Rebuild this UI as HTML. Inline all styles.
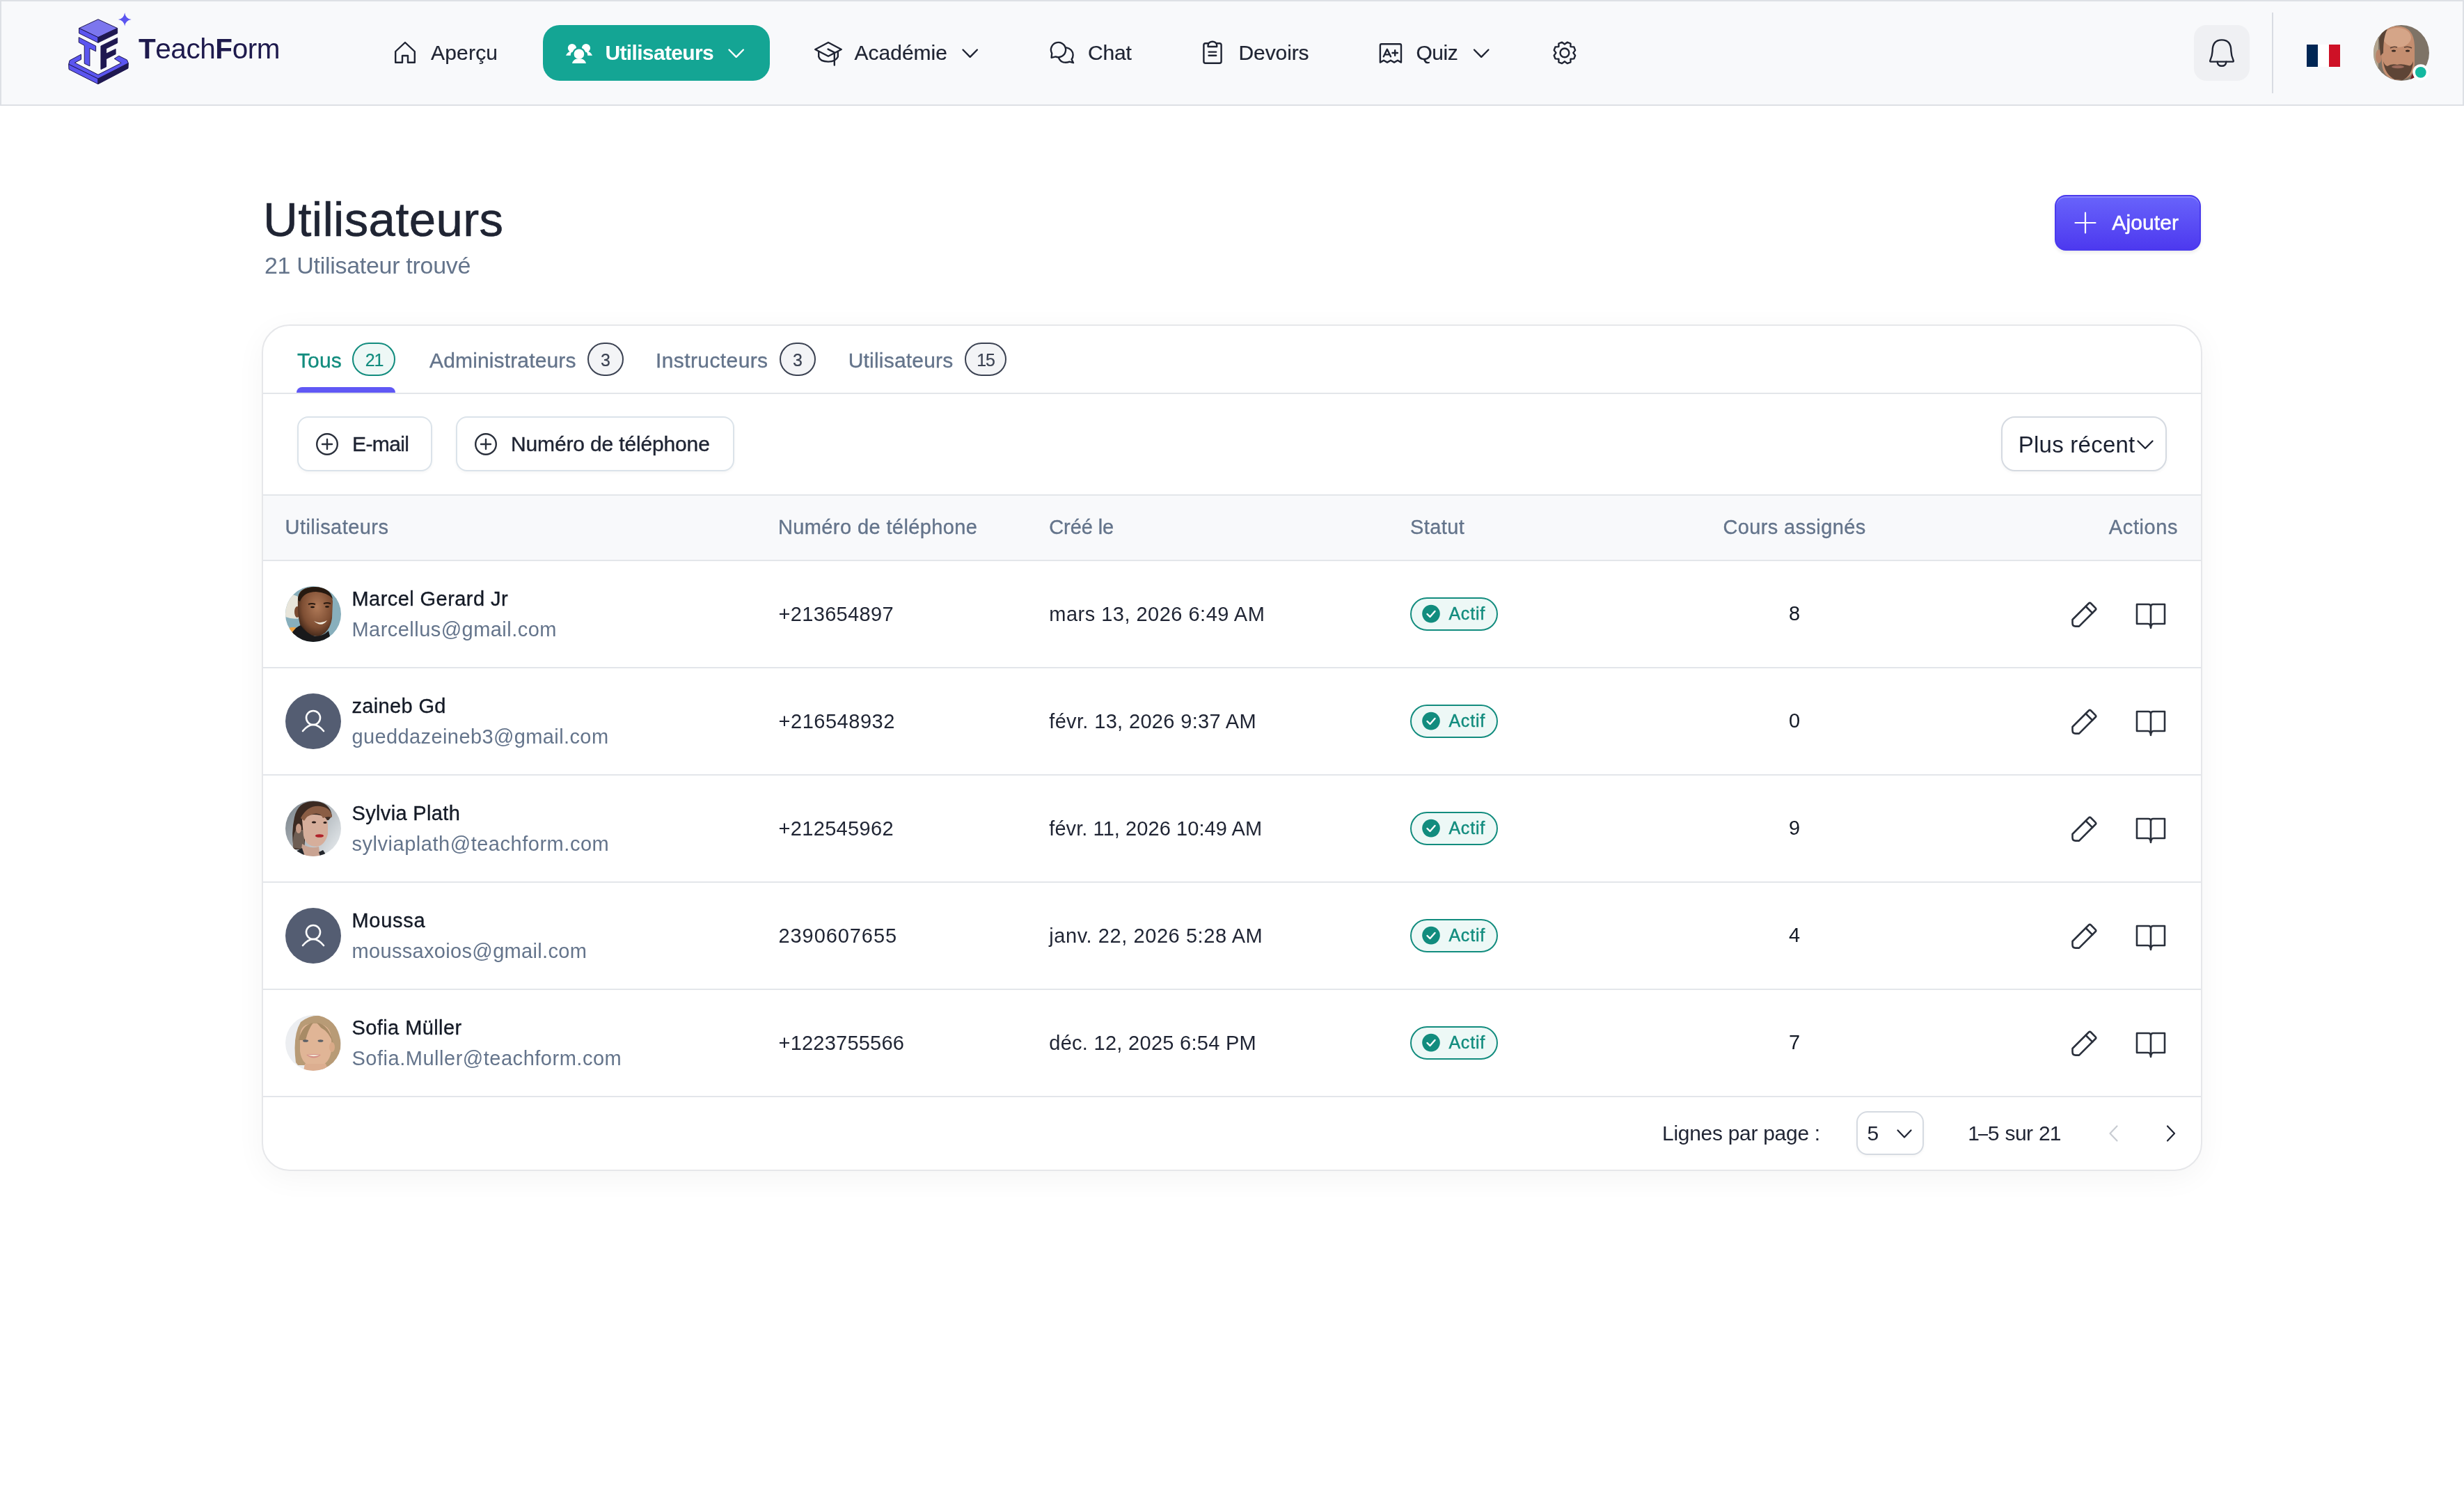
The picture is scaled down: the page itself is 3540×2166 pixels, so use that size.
<!DOCTYPE html>
<html><head><meta charset="utf-8"><title>Utilisateurs</title>
<style>
html,body{margin:0;padding:0;background:#ffffff;}
body{width:3540px;height:2166px;position:relative;overflow:hidden;font-family:"Liberation Sans", sans-serif;}
.t{position:absolute;white-space:nowrap;font-family:"Liberation Sans", sans-serif;}
.t b{font-weight:700;}
svg.ov{position:absolute;left:0;top:0;}
#txt{position:absolute;left:0;top:0;width:3540px;height:2166px;will-change:transform;}
@media (max-width:2400px){html{zoom:0.5;}}
@media (max-width:1500px){html{zoom:0.33333;}}
</style></head><body>
<div style='position:absolute;left:0px;top:0px;width:3540px;height:152px;background:#f8f9fb;border:2px solid #dde0e5;box-sizing:border-box;'></div>
<div style='position:absolute;left:780px;top:36px;width:326px;height:80px;background:#14a594;border-radius:24px;'></div>
<div style='position:absolute;left:3152px;top:36px;width:80px;height:80px;background:#eff0f3;border-radius:18px;'></div>
<div style='position:absolute;left:3264px;top:18px;width:2px;height:116px;background:#d9dce2;'></div>
<div style='position:absolute;left:3314px;top:64px;width:16px;height:32px;background:#002654;'></div>
<div style='position:absolute;left:3330px;top:64px;width:16px;height:32px;background:#ffffff;'></div>
<div style='position:absolute;left:3346px;top:64px;width:16px;height:32px;background:#ce1126;'></div>
<div style='position:absolute;left:2952px;top:280px;width:210px;height:80px;background:linear-gradient(#6863fb,#4d39ef);border:2px solid #4a3aee;box-sizing:border-box;border-radius:16px;box-shadow:inset 0 2px 0 rgba(255,255,255,0.22),0 3px 5px rgba(0,0,0,0.08);'></div>
<div style='position:absolute;left:376px;top:466px;width:2788px;height:1216px;background:#ffffff;border:2px solid #e6e7ea;border-radius:40px;box-sizing:border-box;box-shadow:0 10px 44px rgba(0,0,0,0.045);'></div>
<div style='position:absolute;left:506px;top:492px;width:62px;height:48px;background:#eef8f6;border:2px solid #128c7e;border-radius:24px;box-sizing:border-box;'></div>
<div style='position:absolute;left:426px;top:556px;width:142px;height:8px;background:#6058f5;border-radius:8px 8px 0 0;'></div>
<div style='position:absolute;left:844px;top:492px;width:52px;height:48px;background:#f3f4f6;border:2px solid #3b4252;border-radius:24px;box-sizing:border-box;'></div>
<div style='position:absolute;left:1120px;top:492px;width:52px;height:48px;background:#f3f4f6;border:2px solid #3b4252;border-radius:24px;box-sizing:border-box;'></div>
<div style='position:absolute;left:1386px;top:492px;width:60px;height:48px;background:#f3f4f6;border:2px solid #3b4252;border-radius:24px;box-sizing:border-box;'></div>
<div style='position:absolute;left:378px;top:564px;width:2784px;height:2px;background:#e3e6ea;'></div>
<div style='position:absolute;left:427px;top:598px;width:194px;height:79px;background:#fff;border:2px solid #dbe3ea;border-radius:16px;box-sizing:border-box;box-shadow:0 2px 4px rgba(0,0,0,0.04);'></div>
<div style='position:absolute;left:655px;top:598px;width:400px;height:79px;background:#fff;border:2px solid #dbe3ea;border-radius:16px;box-sizing:border-box;box-shadow:0 2px 4px rgba(0,0,0,0.04);'></div>
<div style='position:absolute;left:2875px;top:598px;width:238px;height:79px;background:#fff;border:2px solid #d5dae1;border-radius:20px;box-sizing:border-box;box-shadow:0 2px 4px rgba(0,0,0,0.04);'></div>
<div style='position:absolute;left:378px;top:710px;width:2784px;height:2px;background:#e3e6ea;'></div>
<div style='position:absolute;left:378px;top:712px;width:2784px;height:92px;background:#f8f9fb;'></div>
<div style='position:absolute;left:378px;top:804px;width:2784px;height:2px;background:#e3e6ea;'></div>
<div style='position:absolute;left:378px;top:958px;width:2784px;height:2px;background:#e3e6ea;'></div>
<div style='position:absolute;left:2026px;top:858px;width:126px;height:48px;background:#edf8f6;border:2px solid #128c7e;border-radius:24px;box-sizing:border-box;'></div>
<div style='position:absolute;left:378px;top:1112px;width:2784px;height:2px;background:#e3e6ea;'></div>
<div style='position:absolute;left:2026px;top:1012px;width:126px;height:48px;background:#edf8f6;border:2px solid #128c7e;border-radius:24px;box-sizing:border-box;'></div>
<div style='position:absolute;left:378px;top:1266px;width:2784px;height:2px;background:#e3e6ea;'></div>
<div style='position:absolute;left:2026px;top:1166px;width:126px;height:48px;background:#edf8f6;border:2px solid #128c7e;border-radius:24px;box-sizing:border-box;'></div>
<div style='position:absolute;left:378px;top:1420px;width:2784px;height:2px;background:#e3e6ea;'></div>
<div style='position:absolute;left:2026px;top:1320px;width:126px;height:48px;background:#edf8f6;border:2px solid #128c7e;border-radius:24px;box-sizing:border-box;'></div>
<div style='position:absolute;left:378px;top:1574px;width:2784px;height:2px;background:#e3e6ea;'></div>
<div style='position:absolute;left:2026px;top:1474px;width:126px;height:48px;background:#edf8f6;border:2px solid #128c7e;border-radius:24px;box-sizing:border-box;'></div>
<div style='position:absolute;left:2667px;top:1596px;width:97px;height:63px;background:#fff;border:2px solid #d5dae1;border-radius:16px;box-sizing:border-box;box-shadow:0 2px 4px rgba(0,0,0,0.04);'></div>
<div style='position:absolute;left:2842px;top:1628.6px;width:13.5px;height:2.2000000000000455px;background:#1f2433;'></div>
<div id="txt">
<span class='t' style='left:199.00px;top:50.08px;font-size:40.5px;line-height:40.5px;color:#1e1a4d;letter-spacing:-0.45px;font-weight:400;'><b>T</b>each<b>F</b>orm</span>
<span class='t' style='left:619.00px;top:61.00px;font-size:30px;line-height:30px;color:#1f2433;letter-spacing:0.2px;font-weight:400;-webkit-text-stroke:0.2px #1f2433;'>Aperçu</span>
<span class='t' style='left:869.50px;top:61.00px;font-size:30px;line-height:30px;color:#ffffff;letter-spacing:-0.66px;font-weight:700;'>Utilisateurs</span>
<span class='t' style='left:1227.50px;top:61.00px;font-size:30px;line-height:30px;color:#1f2433;letter-spacing:0.0px;font-weight:400;-webkit-text-stroke:0.2px #1f2433;'>Académie</span>
<span class='t' style='left:1563.00px;top:61.00px;font-size:30px;line-height:30px;color:#1f2433;letter-spacing:-0.2px;font-weight:400;-webkit-text-stroke:0.2px #1f2433;'>Chat</span>
<span class='t' style='left:1779.50px;top:61.00px;font-size:30px;line-height:30px;color:#1f2433;letter-spacing:-0.1px;font-weight:400;-webkit-text-stroke:0.2px #1f2433;'>Devoirs</span>
<span class='t' style='left:2034.50px;top:61.00px;font-size:30px;line-height:30px;color:#1f2433;letter-spacing:-0.5px;font-weight:400;-webkit-text-stroke:0.2px #1f2433;'>Quiz</span>
<span class='t' style='left:378.00px;top:281.35px;font-size:69px;line-height:69px;color:#1f2433;letter-spacing:0.35px;font-weight:400;-webkit-text-stroke:0.6px #1f2433;'>Utilisateurs</span>
<span class='t' style='left:380.00px;top:363.60px;font-size:34px;line-height:34px;color:#64748b;letter-spacing:-0.3px;font-weight:400;'>21 Utilisateur trouvé</span>
<span class='t' style='left:3034.30px;top:304.50px;font-size:30px;line-height:30px;color:#ffffff;letter-spacing:0.1px;font-weight:400;-webkit-text-stroke:0.5px #ffffff;'>Ajouter</span>
<span class='t' style='left:427.00px;top:502.50px;font-size:30px;line-height:30px;color:#128c7e;letter-spacing:0.1px;font-weight:400;-webkit-text-stroke:0.35px #128c7e;'>Tous</span>
<span class='t' style='left:537.40px;transform:translateX(-50%);top:504.75px;font-size:25px;line-height:25px;color:#128c7e;letter-spacing:-1.2px;font-weight:400;-webkit-text-stroke:0.2px #128c7e;'>21</span>
<span class='t' style='left:617.00px;top:502.50px;font-size:30px;line-height:30px;color:#64748b;letter-spacing:0.15px;font-weight:400;-webkit-text-stroke:0.35px #64748b;'>Administrateurs</span>
<span class='t' style='left:870.00px;transform:translateX(-50%);top:504.75px;font-size:25px;line-height:25px;color:#3b4252;letter-spacing:0.0px;font-weight:400;-webkit-text-stroke:0.2px #3b4252;'>3</span>
<span class='t' style='left:942.00px;top:502.50px;font-size:30px;line-height:30px;color:#64748b;letter-spacing:0.4px;font-weight:400;-webkit-text-stroke:0.35px #64748b;'>Instructeurs</span>
<span class='t' style='left:1146.00px;transform:translateX(-50%);top:504.75px;font-size:25px;line-height:25px;color:#3b4252;letter-spacing:0.0px;font-weight:400;-webkit-text-stroke:0.2px #3b4252;'>3</span>
<span class='t' style='left:1218.70px;top:502.50px;font-size:30px;line-height:30px;color:#64748b;letter-spacing:0.2px;font-weight:400;-webkit-text-stroke:0.35px #64748b;'>Utilisateurs</span>
<span class='t' style='left:1416.00px;transform:translateX(-50%);top:504.75px;font-size:25px;line-height:25px;color:#3b4252;letter-spacing:-1.2px;font-weight:400;-webkit-text-stroke:0.2px #3b4252;'>15</span>
<span class='t' style='left:506.00px;top:623.25px;font-size:30px;line-height:30px;color:#1f2433;letter-spacing:-0.6px;font-weight:400;-webkit-text-stroke:0.4px #1f2433;'>E-mail</span>
<span class='t' style='left:734.00px;top:623.25px;font-size:30px;line-height:30px;color:#1f2433;letter-spacing:-0.15px;font-weight:400;-webkit-text-stroke:0.4px #1f2433;'>Numéro de téléphone</span>
<span class='t' style='left:2899.70px;top:621.55px;font-size:33px;line-height:33px;color:#1a2030;letter-spacing:0.25px;font-weight:400;'>Plus récent</span>
<span class='t' style='left:409.50px;top:743.35px;font-size:29px;line-height:29px;color:#64748b;letter-spacing:0.46px;font-weight:400;-webkit-text-stroke:0.35px #64748b;'>Utilisateurs</span>
<span class='t' style='left:1117.90px;top:743.35px;font-size:29px;line-height:29px;color:#64748b;letter-spacing:0.4px;font-weight:400;-webkit-text-stroke:0.35px #64748b;'>Numéro de téléphone</span>
<span class='t' style='left:1507.25px;top:743.35px;font-size:29px;line-height:29px;color:#64748b;letter-spacing:-0.09px;font-weight:400;-webkit-text-stroke:0.35px #64748b;'>Créé le</span>
<span class='t' style='left:2026.00px;top:743.35px;font-size:29px;line-height:29px;color:#64748b;letter-spacing:0.39px;font-weight:400;-webkit-text-stroke:0.35px #64748b;'>Statut</span>
<span class='t' style='left:2578.00px;transform:translateX(-50%);top:743.35px;font-size:29px;line-height:29px;color:#64748b;letter-spacing:0.37px;font-weight:400;-webkit-text-stroke:0.35px #64748b;'>Cours assignés</span>
<span class='t' style='left:3129.20px;transform:translateX(-100%);top:743.35px;font-size:29px;line-height:29px;color:#64748b;letter-spacing:0.61px;font-weight:400;-webkit-text-stroke:0.35px #64748b;'>Actions</span>
<span class='t' style='left:505.50px;top:845.85px;font-size:29px;line-height:29px;color:#141a26;letter-spacing:0.434px;font-weight:400;-webkit-text-stroke:0.35px #141a26;'>Marcel Gerard Jr</span>
<span class='t' style='left:505.50px;top:889.85px;font-size:29px;line-height:29px;color:#64748b;letter-spacing:0.456px;font-weight:400;'>Marcellus@gmail.com</span>
<span class='t' style='left:1118.50px;top:867.85px;font-size:29px;line-height:29px;color:#1f2433;letter-spacing:0.334px;font-weight:400;'>+213654897</span>
<span class='t' style='left:1507.25px;top:867.85px;font-size:29px;line-height:29px;color:#1f2433;letter-spacing:0.485px;font-weight:400;'>mars 13, 2026 6:49 AM</span>
<span class='t' style='left:2081.40px;top:868.75px;font-size:25px;line-height:25px;color:#128c7e;letter-spacing:0.8px;font-weight:400;-webkit-text-stroke:0.45px #128c7e;'>Actif</span>
<span class='t' style='left:2578.00px;transform:translateX(-50%);top:867.35px;font-size:29px;line-height:29px;color:#141a26;letter-spacing:0.0px;font-weight:400;'>8</span>
<span class='t' style='left:505.50px;top:999.85px;font-size:29px;line-height:29px;color:#141a26;letter-spacing:0.34px;font-weight:400;-webkit-text-stroke:0.35px #141a26;'>zaineb Gd</span>
<span class='t' style='left:505.50px;top:1043.85px;font-size:29px;line-height:29px;color:#64748b;letter-spacing:0.391px;font-weight:400;'>gueddazeineb3@gmail.com</span>
<span class='t' style='left:1118.50px;top:1021.85px;font-size:29px;line-height:29px;color:#1f2433;letter-spacing:0.533px;font-weight:400;'>+216548932</span>
<span class='t' style='left:1507.25px;top:1021.85px;font-size:29px;line-height:29px;color:#1f2433;letter-spacing:0.344px;font-weight:400;'>févr. 13, 2026 9:37 AM</span>
<span class='t' style='left:2081.40px;top:1022.75px;font-size:25px;line-height:25px;color:#128c7e;letter-spacing:0.8px;font-weight:400;-webkit-text-stroke:0.45px #128c7e;'>Actif</span>
<span class='t' style='left:2578.00px;transform:translateX(-50%);top:1021.35px;font-size:29px;line-height:29px;color:#141a26;letter-spacing:0.0px;font-weight:400;'>0</span>
<span class='t' style='left:505.50px;top:1153.85px;font-size:29px;line-height:29px;color:#141a26;letter-spacing:0.35px;font-weight:400;-webkit-text-stroke:0.35px #141a26;'>Sylvia Plath</span>
<span class='t' style='left:505.50px;top:1197.85px;font-size:29px;line-height:29px;color:#64748b;letter-spacing:0.525px;font-weight:400;'>sylviaplath@teachform.com</span>
<span class='t' style='left:1118.50px;top:1175.85px;font-size:29px;line-height:29px;color:#1f2433;letter-spacing:0.334px;font-weight:400;'>+212545962</span>
<span class='t' style='left:1507.25px;top:1175.85px;font-size:29px;line-height:29px;color:#1f2433;letter-spacing:0.078px;font-weight:400;'>févr. 11, 2026 10:49 AM</span>
<span class='t' style='left:2081.40px;top:1176.75px;font-size:25px;line-height:25px;color:#128c7e;letter-spacing:0.8px;font-weight:400;-webkit-text-stroke:0.45px #128c7e;'>Actif</span>
<span class='t' style='left:2578.00px;transform:translateX(-50%);top:1175.35px;font-size:29px;line-height:29px;color:#141a26;letter-spacing:0.0px;font-weight:400;'>9</span>
<span class='t' style='left:505.50px;top:1307.85px;font-size:29px;line-height:29px;color:#141a26;letter-spacing:0.7px;font-weight:400;-webkit-text-stroke:0.35px #141a26;'>Moussa</span>
<span class='t' style='left:505.50px;top:1351.85px;font-size:29px;line-height:29px;color:#64748b;letter-spacing:0.33px;font-weight:400;'>moussaxoios@gmail.com</span>
<span class='t' style='left:1118.50px;top:1329.85px;font-size:29px;line-height:29px;color:#1f2433;letter-spacing:0.922px;font-weight:400;'>2390607655</span>
<span class='t' style='left:1507.25px;top:1329.85px;font-size:29px;line-height:29px;color:#1f2433;letter-spacing:0.57px;font-weight:400;'>janv. 22, 2026 5:28 AM</span>
<span class='t' style='left:2081.40px;top:1330.75px;font-size:25px;line-height:25px;color:#128c7e;letter-spacing:0.8px;font-weight:400;-webkit-text-stroke:0.45px #128c7e;'>Actif</span>
<span class='t' style='left:2578.00px;transform:translateX(-50%);top:1329.35px;font-size:29px;line-height:29px;color:#141a26;letter-spacing:0.0px;font-weight:400;'>4</span>
<span class='t' style='left:505.50px;top:1461.85px;font-size:29px;line-height:29px;color:#141a26;letter-spacing:0.413px;font-weight:400;-webkit-text-stroke:0.35px #141a26;'>Sofia Müller</span>
<span class='t' style='left:505.50px;top:1505.85px;font-size:29px;line-height:29px;color:#64748b;letter-spacing:0.516px;font-weight:400;'>Sofia.Muller@teachform.com</span>
<span class='t' style='left:1118.50px;top:1483.85px;font-size:29px;line-height:29px;color:#1f2433;letter-spacing:0.22px;font-weight:400;'>+1223755566</span>
<span class='t' style='left:1507.25px;top:1483.85px;font-size:29px;line-height:29px;color:#1f2433;letter-spacing:0.285px;font-weight:400;'>déc. 12, 2025 6:54 PM</span>
<span class='t' style='left:2081.40px;top:1484.75px;font-size:25px;line-height:25px;color:#128c7e;letter-spacing:0.8px;font-weight:400;-webkit-text-stroke:0.45px #128c7e;'>Actif</span>
<span class='t' style='left:2578.00px;transform:translateX(-50%);top:1483.35px;font-size:29px;line-height:29px;color:#141a26;letter-spacing:0.0px;font-weight:400;'>7</span>
<span class='t' style='left:2388.10px;top:1613.00px;font-size:30px;line-height:30px;color:#1f2433;letter-spacing:-0.3px;font-weight:400;'>Lignes par page :</span>
<span class='t' style='left:2682.50px;top:1613.00px;font-size:30px;line-height:30px;color:#1f2433;letter-spacing:0.0px;font-weight:400;'>5</span>
<span class='t' style='left:2827.20px;top:1613.00px;font-size:30px;line-height:30px;color:#1f2433;letter-spacing:0.0px;font-weight:400;'>1</span>
<span class='t' style='left:2855.70px;top:1613.00px;font-size:30px;line-height:30px;color:#1f2433;letter-spacing:0.0px;font-weight:400;'>5</span>
<span class='t' style='left:2880.50px;top:1613.00px;font-size:30px;line-height:30px;color:#1f2433;letter-spacing:-0.6px;font-weight:400;'>sur</span>
<span class='t' style='left:2929.00px;top:1613.00px;font-size:30px;line-height:30px;color:#1f2433;letter-spacing:-1.0px;font-weight:400;'>21</span>
</div>
<svg class="ov" width="3540" height="2166" viewBox="0 0 3540 2166">
<g stroke='#1f1851' stroke-width='1' stroke-linejoin='round'>
<polygon points='113.60,40.53 140.95,27.76 168.67,40.53 140.95,53.66' fill='#7c76ee'/>
<polygon points='113.60,40.53 140.95,53.66 140.95,61.32 113.60,47.82' fill='#5b55f0'/>
<polygon points='140.95,53.66 168.67,40.53 168.67,47.82 140.95,61.32' fill='#1f1851'/>
<polygon points='113.23,53.66 137.67,66.06 137.67,73.72 128.92,69.34 128.92,94.87 121.26,91.22 121.26,65.33 113.23,60.95' fill='#5b55f0'/>
<polygon points='144.96,66.06 168.67,54.39 168.67,61.68 152.62,69.70 152.62,77.00 166.12,70.43 166.12,77.73 152.62,84.66 152.62,95.96 144.96,99.61' fill='#1f1851'/>
<polygon points='116.52,78.09 116.52,85.39 107.40,90.13 140.95,107.27 174.14,90.49 164.29,84.29 170.86,80.28 182.53,86.12 184.35,90.86 140.95,113.10 98.65,92.32 100.11,86.85' fill='#5b55f0'/>
<polygon points='98.65,92.32 140.95,113.10 140.95,120.76 99.01,99.61' fill='#5b55f0'/>
<polygon points='140.95,113.10 184.35,90.86 183.99,98.15 140.95,120.76' fill='#1f1851'/>
</g>
<path d='M179.2,18.3 Q180.39999999999998,26.900000000000002 188.7,28.1 Q180.39999999999998,29.3 179.2,37.6 Q178.0,29.3 169.79999999999998,28.1 Q178.0,26.900000000000002 179.2,18.3 Z' fill='#5b55f0'/>
<g fill='none' stroke='#1f2433' stroke-width='2.4' stroke-linecap='round' stroke-linejoin='round'>
<path d='M568.2,74 L582,61 L595.8,74 V89.8 H586 V80 H578 V89.8 H568.2 Z'/>
<path d='M1171.2,71 L1190,61 L1208.8,71 L1190,80.8 Z'/>
<path d='M1189.6,70.6 L1198.8,75.4 V93.6'/>
<path d='M1176.2,74 V81.4 Q1178,88.4 1190,88.6 Q1200.5,88.4 1203.8,81.4 V74.2'/>
<path d='M1511.2,76.6 A10.6,10.6 0 1 1 1516.6,81.4 L1510.6,82.8 Z'/>
<path d='M1532.2,68.4 C1537.8,69.4 1541.6,73.6 1541.6,78.9 C1541.6,81.6 1540.8,83.6 1539.6,85.3 L1542,90.2 L1536.6,88.7 C1534.8,89.4 1533,89.8 1530.9,89.8 C1526.6,89.8 1523,87.4 1521.2,83.4'/>
<path d='M1735.6,62.2 H1732 Q1729.4,62.2 1729.4,64.8 V88.2 Q1729.4,90.8 1732,90.8 H1752 Q1754.6,90.8 1754.6,88.2 V64.8 Q1754.6,62.2 1752,62.2 H1748.2'/>
<path d='M1735.6,67 V65 A6.2,5.2 0 0 1 1748.2,65 V67 Z'/>
<path d='M1736.6,74.6 H1747.2 M1736.6,79.7 H1747.2'/>
<path d='M1982.9,89.6 V65.2 Q1982.9,63.3 1984.8,63.3 H2011.1 Q2013,63.3 2013,65.2 V89.6 L2008,86.8 L2003,89.6 L1998,86.8 L1993,89.6 L1988,86.8 Z'/>
<path d='M1987.8,81.2 L1992.9,70.8 L1998,81.2 M1989.4,78.4 H1996.4 M2004.2,72.3 V79.7 M2000.5,76 H2007.9'/>
<path d='M2247.90,63.50 L2251.70,60.70 L2256.40,62.50 L2256.40,67.10 L2261.30,67.40 L2263.10,72.10 L2260.30,75.90 L2260.30,75.90 L2263.10,79.70 L2261.30,84.40 L2256.40,84.70 L2256.40,89.30 L2251.70,91.10 L2247.90,88.30 L2247.90,88.30 L2244.10,91.10 L2239.40,89.30 L2239.40,84.70 L2234.50,84.40 L2232.70,79.70 L2235.50,75.90 L2235.50,75.90 L2232.70,72.10 L2234.50,67.40 L2239.40,67.10 L2239.40,62.50 L2244.10,60.70 L2247.90,63.50 Z'/>
<circle cx='2247.9' cy='75.9' r='6.4'/>
<path d='M1383.5,71.5 L1393.7,81.8 L1403.9,71.5'/>
<path d='M2118,71.5 L2128.2,81.8 L2138.4,71.5'/>
</g>
<g fill='none' stroke='#ffffff' stroke-width='2.4' stroke-linecap='round' stroke-linejoin='round'>
<path d='M1047.5,71.5 L1057.7,81.8 L1067.9,71.5'/>
</g>
<g fill='#ffffff'>
<circle cx='821.9' cy='69' r='6.1'/><circle cx='842' cy='69' r='6.1'/>
<path d='M813,79.8 Q815,74.5 821,73.5 L823,73.5 Q819.5,76 819.8,79.8 Z'/>
<path d='M851,79.8 Q849,74.5 843,73.5 L841,73.5 Q844.5,76 844.2,79.8 Z'/>
</g>
<circle cx='831.9' cy='77.5' r='9.6' fill='#14a594'/>
<path d='M821.9,91 Q823,85 829,84 L835,84 Q841,85 842,91 Z' fill='#14a594' stroke='#14a594' stroke-width='5'/>
<g fill='#ffffff'><circle cx='831.9' cy='77.7' r='7.3'/><path d='M821.9,91 Q823.5,85.5 828.5,84.5 L835.3,84.5 Q840.5,85.5 842,91 Z'/></g>
<g fill='none' stroke='#1f2433' stroke-width='2.4' stroke-linecap='round' stroke-linejoin='round'>
<path d='M3176.2,88.6 Q3174.6,88.6 3175.4,86.6 Q3178.4,79.5 3178.6,73.5 Q3178.6,57.4 3192,57.4 Q3205.4,57.4 3205.4,73.5 Q3205.6,79.5 3208.6,86.6 Q3209.4,88.6 3207.8,88.6 Z'/>
<path d='M3185.6,88.8 Q3186.2,94.8 3192,94.8 Q3197.8,94.8 3198.4,88.8'/>
</g>
<g fill='none' stroke='#ffffff' stroke-width='2.2' stroke-linecap='round' stroke-linejoin='round'>
<path d='M2996,305.5 V334.5 M2981.5,320 H3010.5'/>
</g>
<g fill='none' stroke='#2a303c' stroke-width='2.4' stroke-linecap='round' stroke-linejoin='round'>
<circle cx='470' cy='638' r='14.8'/><path d='M470,631 V645 M463,638 H477'/>
<circle cx='698' cy='638' r='14.8'/><path d='M698,631 V645 M691,638 H705'/>
</g>
<g fill='none' stroke='#1f2433' stroke-width='2.4' stroke-linecap='round' stroke-linejoin='round'>
<path d='M3071.5,633.5 L3082,644 L3092.5,633.5'/>
</g>
<circle cx='2056' cy='881.6' r='12.8' fill='#128c7e'/>
<path d='M2050.5,882 L2054.5,886 L2061.5,878' fill='none' stroke='#ffffff' stroke-width='2.4' stroke-linecap='round' stroke-linejoin='round'/>
<g fill='none' stroke='#2a303c' stroke-width='2.6' stroke-linecap='round' stroke-linejoin='round'>
<path d='M2977.5,895 V890 L3001,866.5 Q3002.4,865.2 3003.8,866.5 L3010.6,873.3 Q3011.9,874.7 3010.6,876 L2987,899.6 H2982 Q2977.5,899.6 2977.5,895 Z'/>
<path d='M2996.6,871 L3006.2,880.6'/>
<path d='M3070,868 H3086.7 Q3090,868 3090,871.5 V902 M3070,868 V896 H3086 Q3089.6,896 3090,902 Q3090.4,896 3094,896 H3110 V868 H3093.3 Q3090,868 3090,871.5'/>
</g>
<circle cx='450' cy='1036' r='40' fill='#545d72'/>
<g fill='none' stroke='#ffffff' stroke-width='2.6' stroke-linecap='round'><circle cx='450' cy='1031' r='10'/><path d='M435,1050 Q450,1032 465,1050'/></g>
<circle cx='2056' cy='1035.6' r='12.8' fill='#128c7e'/>
<path d='M2050.5,1036 L2054.5,1040 L2061.5,1032' fill='none' stroke='#ffffff' stroke-width='2.4' stroke-linecap='round' stroke-linejoin='round'/>
<g fill='none' stroke='#2a303c' stroke-width='2.6' stroke-linecap='round' stroke-linejoin='round'>
<path d='M2977.5,1049 V1044 L3001,1020.5 Q3002.4,1019.2 3003.8,1020.5 L3010.6,1027.3 Q3011.9,1028.7 3010.6,1030 L2987,1053.6 H2982 Q2977.5,1053.6 2977.5,1049 Z'/>
<path d='M2996.6,1025 L3006.2,1034.6'/>
<path d='M3070,1022 H3086.7 Q3090,1022 3090,1025.5 V1056 M3070,1022 V1050 H3086 Q3089.6,1050 3090,1056 Q3090.4,1050 3094,1050 H3110 V1022 H3093.3 Q3090,1022 3090,1025.5'/>
</g>
<circle cx='2056' cy='1189.6' r='12.8' fill='#128c7e'/>
<path d='M2050.5,1190 L2054.5,1194 L2061.5,1186' fill='none' stroke='#ffffff' stroke-width='2.4' stroke-linecap='round' stroke-linejoin='round'/>
<g fill='none' stroke='#2a303c' stroke-width='2.6' stroke-linecap='round' stroke-linejoin='round'>
<path d='M2977.5,1203 V1198 L3001,1174.5 Q3002.4,1173.2 3003.8,1174.5 L3010.6,1181.3 Q3011.9,1182.7 3010.6,1184 L2987,1207.6 H2982 Q2977.5,1207.6 2977.5,1203 Z'/>
<path d='M2996.6,1179 L3006.2,1188.6'/>
<path d='M3070,1176 H3086.7 Q3090,1176 3090,1179.5 V1210 M3070,1176 V1204 H3086 Q3089.6,1204 3090,1210 Q3090.4,1204 3094,1204 H3110 V1176 H3093.3 Q3090,1176 3090,1179.5'/>
</g>
<circle cx='450' cy='1344' r='40' fill='#545d72'/>
<g fill='none' stroke='#ffffff' stroke-width='2.6' stroke-linecap='round'><circle cx='450' cy='1339' r='10'/><path d='M435,1358 Q450,1340 465,1358'/></g>
<circle cx='2056' cy='1343.6' r='12.8' fill='#128c7e'/>
<path d='M2050.5,1344 L2054.5,1348 L2061.5,1340' fill='none' stroke='#ffffff' stroke-width='2.4' stroke-linecap='round' stroke-linejoin='round'/>
<g fill='none' stroke='#2a303c' stroke-width='2.6' stroke-linecap='round' stroke-linejoin='round'>
<path d='M2977.5,1357 V1352 L3001,1328.5 Q3002.4,1327.2 3003.8,1328.5 L3010.6,1335.3 Q3011.9,1336.7 3010.6,1338 L2987,1361.6 H2982 Q2977.5,1361.6 2977.5,1357 Z'/>
<path d='M2996.6,1333 L3006.2,1342.6'/>
<path d='M3070,1330 H3086.7 Q3090,1330 3090,1333.5 V1364 M3070,1330 V1358 H3086 Q3089.6,1358 3090,1364 Q3090.4,1358 3094,1358 H3110 V1330 H3093.3 Q3090,1330 3090,1333.5'/>
</g>
<circle cx='2056' cy='1497.6' r='12.8' fill='#128c7e'/>
<path d='M2050.5,1498 L2054.5,1502 L2061.5,1494' fill='none' stroke='#ffffff' stroke-width='2.4' stroke-linecap='round' stroke-linejoin='round'/>
<g fill='none' stroke='#2a303c' stroke-width='2.6' stroke-linecap='round' stroke-linejoin='round'>
<path d='M2977.5,1511 V1506 L3001,1482.5 Q3002.4,1481.2 3003.8,1482.5 L3010.6,1489.3 Q3011.9,1490.7 3010.6,1492 L2987,1515.6 H2982 Q2977.5,1515.6 2977.5,1511 Z'/>
<path d='M2996.6,1487 L3006.2,1496.6'/>
<path d='M3070,1484 H3086.7 Q3090,1484 3090,1487.5 V1518 M3070,1484 V1512 H3086 Q3089.6,1512 3090,1518 Q3090.4,1512 3094,1512 H3110 V1484 H3093.3 Q3090,1484 3090,1487.5'/>
</g>
<defs><clipPath id='cl'><circle cx='40' cy='40' r='40'/></clipPath></defs>
<g transform='translate(410,842)' clip-path='url(#cl)'><defs><radialGradient id='mf' cx='0.55' cy='0.4' r='0.6'><stop offset='0' stop-color='#b07a58'/><stop offset='0.7' stop-color='#7e4e33'/><stop offset='1' stop-color='#4a2c1c'/></radialGradient></defs><rect width='80' height='80' fill='#88afbc'/><path d='M0,12 Q10,10 20,16 L22,46 Q10,48 0,44 Z' fill='#e8e5da'/><ellipse cx='11' cy='64' rx='9' ry='5' fill='#f2a444'/><ellipse cx='17' cy='37' rx='4' ry='8' fill='#7a4a30'/><path d='M18,16 Q20,1 43,1 Q67,2 68,22 L67,46 Q64,66 48,72 Q30,72 22,58 Q17,44 18,16 Z' fill='url(#mf)'/><path d='M18,20 Q19,1 43,1 Q64,2 68,18 Q60,9 44,8 Q26,8 21,22 Z' fill='#261910'/><path d='M33,26 Q38,24 43,26 M55,25 Q60,23 65,25' stroke='#2a1a10' stroke-width='2.2' fill='none'/><ellipse cx='39' cy='30' rx='3' ry='1.3' fill='#1c120c'/><ellipse cx='60' cy='29.5' rx='3' ry='1.3' fill='#1c120c'/><path d='M41,50 Q51,55 60,49 Q52,60 41,50 Z' fill='#f3eee0'/><path d='M24,56 Q34,74 50,72 Q62,66 65,52 Q60,70 46,74 Q30,72 24,56 Z' fill='#2e1e14' opacity='0.7'/><path d='M0,80 L10,66 Q16,58 22,56 Q30,68 42,72 Q54,72 62,64 L66,80 Z' fill='#19191b'/></g>
<g transform='translate(410,1150)' clip-path='url(#cl)'><defs><linearGradient id='sg' x1='0' y1='0.2' x2='1' y2='0.9'><stop offset='0' stop-color='#7f888f'/><stop offset='1' stop-color='#e8ecef'/></linearGradient></defs><rect width='80' height='80' fill='url(#sg)'/><path d='M12,70 Q8,46 13,24 Q18,1 40,1 Q64,1 67,22 L62,28 L30,30 L27,70 Z' fill='#3b2a22'/><path d='M11,68 Q10,50 15,42 L27,42 L27,70 Z' fill='#6e5e54'/><path d='M24,27 Q24,20 41,20 Q61,20 61,34 L61,48 Q57,64 45,66 Q29,66 26,50 Z' fill='#d6ae9b'/><ellipse cx='19' cy='40' rx='4' ry='7' fill='#c49a86'/><path d='M22,25 Q32,6 50,8 Q66,10 67,24 Q60,22 54,25 Q50,17 41,19 Q31,21 27,29 Z' fill='#8a5d44'/><ellipse cx='41' cy='31' rx='3' ry='1.6' fill='#2a1c18'/><ellipse cx='57' cy='31.5' rx='2.6' ry='1.5' fill='#2a1c18'/><ellipse cx='49' cy='50.5' rx='6' ry='2.3' fill='#b0222a'/><path d='M22,80 L24,62 Q36,70 48,66 L50,80 Z' fill='#c9a392'/><path d='M16,80 L17,72 L24,68 L28,80 Z M48,74 L54,71 L60,80 L50,80 Z' fill='#23262c'/></g>
<g transform='translate(410,1458)' clip-path='url(#cl)'><rect width='80' height='80' fill='#eceef1'/><path d='M15,68 Q10,30 22,10 Q36,-1 52,1 Q73,6 79,36 Q81,60 70,80 L54,80 L40,72 L18,72 Z' fill='#b89b76'/><path d='M21,30 Q21,12 42,12 Q65,12 66,34 L66,52 Q62,74 43,74 Q24,74 21,52 Z' fill='#e0b596'/><path d='M28,70 L58,70 L62,80 L26,80 Z' fill='#dcae90'/><path d='M19,36 Q24,14 40,11 Q33,20 29,36 Z M45,11 Q63,13 69,42 Q63,24 51,18 Z' fill='#a88b66'/><ellipse cx='67' cy='46' rx='4' ry='7' fill='#d9aa88'/><ellipse cx='29' cy='37' rx='4' ry='1.8' fill='#5b5f66'/><ellipse cx='50.5' cy='37' rx='4' ry='1.8' fill='#5b5f66'/><path d='M30,57 Q41,55 51,57 Q41,66 30,57 Z' fill='#d48f86'/><path d='M32,57.5 Q41,56.5 49,57.5 Q41,61 32,57.5 Z' fill='#f2ead8'/></g>
<g transform='translate(3410,36)' clip-path='url(#cl)'><rect width='80' height='80' fill='#7e7366'/><rect width='7' height='80' fill='#b2a48e'/><ellipse cx='7.5' cy='45' rx='4.5' ry='10' fill='#b98469'/><path d='M11,30 Q10,2 34,1.5 Q58,2 59,30 L59,56 Q58,78 36,79 Q14,78 12,56 Z' fill='#c48e70'/><ellipse cx='34' cy='18' rx='20' ry='14' fill='#d7a78b' opacity='0.9'/><path d='M8,20 Q12,8 20,6 Q14,16 14,40 L10,44 Z' fill='#5a4436'/><path d='M14,52 Q16,70 30,78 L42,79 Q56,72 57,52 Q54,60 50,58 Q40,55 34,57 Q26,55 20,59 Q16,58 14,52 Z' fill='#5e4536'/><ellipse cx='35' cy='60' rx='9' ry='2.2' fill='#9d6b5c'/><ellipse cx='29' cy='37' rx='3' ry='1.5' fill='#3a2a22'/><ellipse cx='49' cy='37' rx='3' ry='1.5' fill='#3a2a22'/><path d='M24,33 Q29,30 34,32 M44,32 Q50,30 55,33' stroke='#5a4034' stroke-width='1.6' fill='none'/><path d='M58,64 L72,66 L80,80 L52,80 Z' fill='#7a1f24'/></g>
<circle cx='3477.8' cy='103.8' r='11.6' fill='#ffffff'/><circle cx='3477.8' cy='103.8' r='7.9' fill='#14b8a0'/>
<g fill='none' stroke='#1f2433' stroke-width='2.2' stroke-linecap='round' stroke-linejoin='round'>
<path d='M2726.5,1623.5 L2736,1633.5 L2745.5,1623.5'/>
<path d='M3114,1617.5 L3124,1628 L3114,1638.5'/>
</g>
<g fill='none' stroke='#c8ccd2' stroke-width='2.2' stroke-linecap='round' stroke-linejoin='round'>
<path d='M3041.5,1617.5 L3031.5,1628 L3041.5,1638.5'/>
</g>
</svg>
</body></html>
